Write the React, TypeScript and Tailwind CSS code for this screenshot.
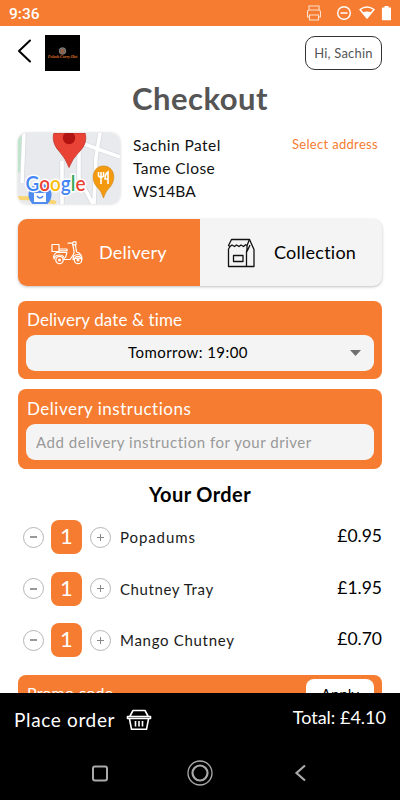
import { useState } from "react";
import { clsx } from "clsx";

interface OrderItem {
  id: number;
  name: string;
  price: number;
  quantity: number;
}

const initialItems: OrderItem[] = [
  { id: 1, name: "Popadums", price: 0.95, quantity: 1 },
  { id: 2, name: "Chutney Tray", price: 1.95, quantity: 1 },
  { id: 3, name: "Mango Chutney", price: 0.7, quantity: 1 },
];

const SERVICE_CHARGE = 0.5;

const nameSpacing: Record<number, string> = {
  1: "tracking-[0.9px]",
  2: "tracking-[0.6px]",
  3: "tracking-[0.7px]",
};

function StatusBar() {
  return (
    <div className="flex h-[26px] shrink-0 items-center justify-between bg-[#f57c30] pl-[9px] pr-[9px] text-white">
      <span className="pt-[3px] font-[Roboto] text-[15.5px] font-medium leading-none">9:36</span>
      <svg width="86" height="18" viewBox="0 0 86 18" fill="none" stroke="#fff">
        <g stroke="#fde0cd" strokeWidth="1.1">
          <path d="M4 6V2h10v4M4 13H2.500V8q0-2 2-2h9q2 0 2 2v5H14" />
          <path d="M4.500 11h9v5h-9z" />
        </g>
        <circle cx="39" cy="9" r="6.300" strokeWidth="1.400" />
        <path d="M35.500 9h7" strokeWidth="1.500" />
        <path d="M55 5.500q7-5 14 0l-7 8.500z" strokeWidth="1.500" strokeLinejoin="round" />
        <path d="M57.500 8.500q4.500-2.200 9 0L62 14.500z" fill="#fff" stroke="none" />
        <path d="M79.500 2h4v1.500h2q.8 0 .8.800v11.200q0 .8-.8.800h-7.800q-.8 0-.8-.8V4.300q0-.8.800-.8h1.800z" fill="#fff" stroke="none" />
      </svg>
    </div>
  );
}

function Header() {
  return (
    <header className="flex h-[46px] shrink-0 items-start pl-[17px] pr-[18px] pt-[9px]">
      <svg width="16" height="30" viewBox="0 0 16 30" fill="none" stroke="#000" strokeWidth="2" strokeLinecap="round" strokeLinejoin="round">
        <path d="M13 5.500 2 16l11 10.500" />
      </svg>
      <div className="ml-[12px] flex h-[36px] w-[35px] flex-col items-center overflow-hidden bg-black pt-[12px]">
        <svg width="9" height="8" viewBox="0 0 9 8">
          <circle cx="4.500" cy="4" r="3.300" fill="#68605c" stroke="#96918e" strokeWidth=".8" />
          <path d="M3 6.500 4.500 2 6 6.500" stroke="#b96534" strokeWidth=".9" fill="none" />
        </svg>
        <span className="whitespace-nowrap font-['Liberation_Serif'] text-[4.4px] font-bold italic leading-[4px] tracking-[-0.2px] text-[#d96a25]">Polash Curry Hut</span>
      </div>
      <button className="ml-auto mt-[1px] h-[34px] w-[77px] rounded-[10px] border border-[#333] text-[13px] leading-none tracking-[0.2px] text-[#555]">
        Hi, Sachin
      </button>
    </header>
  );
}

function MapThumb() {
  return (
    <svg width="102" height="71" viewBox="0 0 102 71" className="mt-[1px] rounded-[9px] shadow-[0_0_3px_rgba(0,0,0,0.2)]">
      <rect width="102" height="71" fill="#e9eaed" />
      <path d="M0 0h5l-1 38-4 2z" fill="#bfe5cc" />
      <g fill="none" stroke="#d5d8dd" strokeWidth="5">
        <path d="M6 0 4 50M44 28v43M61 18v27l14 26M82 0 78 24 76 71M66 11l36 13" />
      </g>
      <g fill="none" stroke="#fff" strokeWidth="3.600">
        <path d="M6 0 4 50M44 28v43M61 18v27l14 26M82 0 78 24 76 71M66 11l36 13" />
      </g>
      <path d="M0 65q20 0 38 5" stroke="#f9d573" strokeWidth="4" fill="none" />
      <circle cx="22" cy="62" r="11.500" fill="#4f8bf0" />
      <path d="M16 60h12v9H16z" fill="#fff" />
      <path d="M18 60q4-6 8 0M19 63q3 4 6 0" fill="none" stroke="#4f8bf0" strokeWidth="1.500" />
      <path d="M51 34.500Q48 26 41 18C36 13 34 5 36 0h31c2 6 0 13-5 18q-8 8-11 16.500z" fill="#e94335" stroke="#b92d24" strokeWidth=".7" />
      <circle cx="51" cy="5" r="6.200" fill="#b11313" />
      <path d="M85.500 65q-2-7-6.500-11c-7-8-4-21 6.500-21s13.500 13 6.500 21q-4.500 4-6.500 11z" fill="#f39a10" stroke="#d28008" strokeWidth=".6" />
      <path d="M80.500 39v4q2.500 3 5 0v-4M83 39v12M90 51V39q-3 2-3 7h3" fill="none" stroke="#fff" strokeWidth="1.600" />
      <text x="7.500" y="57.500" fontFamily="Lato" fontSize="20.500" fontWeight="600" textLength="60" lengthAdjust="spacingAndGlyphs" stroke="#fff" strokeWidth="3" paintOrder="stroke">
        <tspan fill="#4285f4">G</tspan>
        <tspan fill="#ea4335">o</tspan>
        <tspan fill="#fbbc05">o</tspan>
        <tspan fill="#4285f4">g</tspan>
        <tspan fill="#34a853">l</tspan>
        <tspan fill="#ea4335">e</tspan>
      </text>
    </svg>
  );
}

function ScooterIcon() {
  return (
    <svg width="32" height="24" viewBox="0 0 32 24" fill="none" stroke="#fff" strokeWidth="1.200" strokeLinejoin="round" strokeLinecap="round">
      <path d="M1 3.500h7v7H1zM8.500 8H16v1.800H8.500M5.500 11.500H16l-1.500 5" />
      <path d="M17 2.200h4.500L23 10q.3 3-1.500 5l-2.500 3.500h-6.500" />
      <path d="M21.500 3.800H25V.8h-2.500L21.500 2M24.500 4l1 7q3 .5 4.500 3" />
      <path d="M5.500 11.500Q3 13 2.500 16.500M3 18q1-4 5.500-4t5 4.500M22 18.500q0-5 5-5 4 0 4 4.500-4-2-9 .5z" />
      <circle cx="8.500" cy="19" r="3.700" />
      <circle cx="27" cy="19" r="3.700" />
      <circle cx="8.500" cy="19" r=".9" />
      <circle cx="27" cy="19" r=".9" />
    </svg>
  );
}

function BagIcon() {
  return (
    <svg width="28" height="30" viewBox="0 0 28 30" fill="none" stroke="#111" strokeWidth="1.300" strokeLinejoin="round">
      <path d="M4.500 1.500h18L20 7.500l-1.500-.8-2 1.800-2.500-1.500-2 1.500L9.500 7 7.500 8.500 5 7 3 8.500 1.500 7.500z" />
      <path d="M3 8.500 1.500 11v17.500h25.500V11.500l-4.500-10M20 7.500v4l-.5 2v15M23 7l-3 6.500" />
      <path d="M6.500 17.500h9.500v6H6.500z" />
    </svg>
  );
}

function BasketIcon() {
  return (
    <svg width="26" height="22" viewBox="0 0 26 22" fill="none" stroke="#fff" strokeWidth="1.600" strokeLinejoin="round">
      <path d="M4 7 7 1.500h12L22 7M1.500 7.500h23v2h-23zM3.500 10l2 10.300h15L22.500 10" />
      <path d="M9.500 12v5.500M13 12v5.500M16.500 12v5.500" />
    </svg>
  );
}

interface OrderRowProps {
  item: OrderItem;
  onChange: (delta: number) => void;
}

function OrderRow({ item, onChange }: OrderRowProps) {
  const roundButton = "flex size-[21px] items-center justify-center rounded-full border border-[#b5b5b5] bg-white";

  return (
    <div className="flex h-[51.5px] items-center pl-[5px]">
      <button className={roundButton} onClick={() => onChange(-1)}>
        <span className="h-[2px] w-[7px] bg-[#999]" />
      </button>
      <span className="ml-[7px] flex h-[34px] w-[31px] items-center justify-center rounded-[8px] bg-[#f57c30] pb-[2px] text-[22px] leading-none text-white">
        {item.quantity}
      </span>
      <button className={clsx(roundButton, "ml-[7.5px]")} onClick={() => onChange(1)}>
        <svg width="7" height="7" viewBox="0 0 7 7" stroke="#888">
          <path d="M0 3.500h7M3.500 0v7" />
        </svg>
      </button>
      <span className={clsx("ml-[9.5px] text-[15px] text-[#1a1a1a]", nameSpacing[item.id])}>{item.name}</span>
      <span className="ml-auto pb-[2px] text-[17.500px] text-black">£{item.price.toFixed(2)}</span>
    </div>
  );
}

export default function App() {
  const [method, setMethod] = useState<"delivery" | "collection">("delivery");
  const [items, setItems] = useState(initialItems);
  const total = items.reduce((sum, item) => sum + item.price * item.quantity, SERVICE_CHARGE);

  const changeQuantity = (id: number, delta: number) => {
    setItems(items.map((item) => (item.id === id ? { ...item, quantity: Math.max(0, item.quantity + delta) } : item)));
  };

  return (
    <div className="flex h-[800px] w-[400px] flex-col overflow-hidden bg-white font-[Lato,sans-serif] text-black">
      <StatusBar />
      <Header />
      <main className="min-h-0 flex-1 overflow-hidden px-[18px]">
        <h1 className="mt-[6px] text-center text-[31px] font-bold leading-[40px] tracking-[0.5px] text-[#555]">Checkout</h1>

        <section className="mt-[14px] flex h-[73px] items-start">
          <MapThumb />
          <div className="ml-[13px] mt-[2px] text-[15.500px] leading-[23px] text-[#111]">
            <p className="tracking-[0.45px]">Sachin Patel</p>
            <p className="tracking-[0.45px]">Tame Close</p>
            <p>WS14BA</p>
          </div>
          <button className="ml-auto mr-[4px] mt-[3px] text-[13px] leading-[18px] tracking-[0.32px] text-[#f57c30]">Select address</button>
        </section>

        <div className="mt-[14px] flex h-[67px] overflow-hidden rounded-[9px] bg-[#f4f4f4] shadow-[0_1px_3px_rgba(0,0,0,0.25)]">
          <button
            className={clsx("flex w-1/2 items-center pl-[33px]", method === "delivery" ? "bg-[#f57c30] text-white" : "text-black")}
            onClick={() => setMethod("delivery")}
          >
            <ScooterIcon />
            <span className="ml-[16px] text-[18px] tracking-[0.2px]">Delivery</span>
          </button>
          <button className="flex w-1/2 items-center pl-[27px]" onClick={() => setMethod("collection")}>
            <BagIcon />
            <span className="ml-[19px] text-[18px] tracking-[0.25px]">Collection</span>
          </button>
        </div>

        <section className="mt-[15px] h-[78px] rounded-[8px] bg-[#f57c30] px-[8px] pt-[8px]">
          <h2 className="pl-[1px] text-[17px] leading-[22px] tracking-[0.1px] text-white">Delivery date &amp; time</h2>
          <div className="mt-[4px] flex h-[36px] items-center rounded-[9px] bg-[#f4f4f4] pr-[13px]">
            <span className="flex-1 pb-px text-center text-[15px] tracking-[0.45px]">Tomorrow: 19:00</span>
            <svg width="11" height="6" viewBox="0 0 11 6">
              <path d="M0 0h11L5.500 6z" fill="#707070" />
            </svg>
          </div>
        </section>

        <section className="mt-[9.5px] h-[80.5px] rounded-[8px] bg-[#f57c30] px-[8px] pt-[9px]">
          <h2 className="pl-[1px] text-[17px] leading-[22px] tracking-[0.5px] text-white">Delivery instructions</h2>
          <input
            className="mt-[4.5px] block h-[36px] w-full rounded-[9px] bg-[#f4f4f4] px-[10px] text-[15px] tracking-[0.53px] outline-none placeholder:text-[#999]"
            placeholder="Add delivery instruction for your driver"
          />
        </section>

        <h2 className="mt-[13px] text-center text-[20px] font-bold leading-[24px] tracking-[0.4px]">Your Order</h2>
        <div className="mt-[5.5px]">
          {items.map((item) => (
            <OrderRow key={item.id} item={item} onChange={(delta) => changeQuantity(item.id, delta)} />
          ))}
        </div>

        <section className="mt-[9px] flex h-[80px] items-start justify-between rounded-[8px] bg-[#f57c30] px-[8px] pt-[4px]">
          <span className="pl-[1px] pt-[3px] text-[16px] leading-[22px] tracking-[0.2px] text-white">Promo code</span>
          <button className="h-[32px] w-[68px] rounded-[8px] bg-white pb-px text-[15px] leading-none">Apply</button>
        </section>
      </main>

      <footer className="flex h-[53px] shrink-0 items-center bg-black pl-[14px] pr-[14px] text-white">
        <span className="pt-px text-[19px] tracking-[0.65px]">Place order</span>
        <span className="ml-[11px]">
          <BasketIcon />
        </span>
        <span className="ml-auto pb-[4px] text-[18px]">Total: £{total.toFixed(2)}</span>
      </footer>
      <nav className="flex h-[54px] shrink-0 items-center justify-between bg-black px-[88px]">
        <svg width="24" height="28" viewBox="0 0 24 28" fill="none" stroke="#aaa" strokeWidth="2">
          <rect x="5" y="7.500" width="14" height="14" rx="2" />
        </svg>
        <svg width="28" height="28" viewBox="0 0 28 28" fill="none" stroke="#aaa">
          <circle cx="14" cy="14" r="12" strokeWidth="1.300" />
          <circle cx="14" cy="14" r="7.500" strokeWidth="2.200" />
        </svg>
        <svg width="24" height="28" viewBox="0 0 24 28" fill="none" stroke="#aaa" strokeWidth="2.200">
          <path d="m17 6.500-8.500 7.500 8.500 7.500" />
        </svg>
      </nav>
    </div>
  );
}
